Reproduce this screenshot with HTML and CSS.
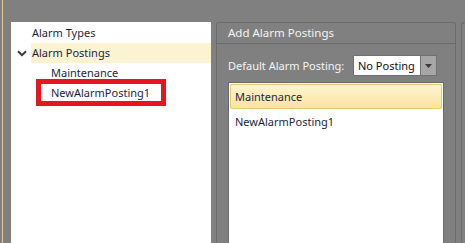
FILE: index.html
```html
<!DOCTYPE html>
<html>

<head>
  <link rel="stylesheet" href="styles.css">
</head>

<body>

  <div class="app">
    <!-- Tree of alarm settings on the left -->
    <div class="tree">
      <div class="node">
        <span class="expander"></span>
        <span class="label">Alarm Types</span>
      </div>
      <div class="node">
        <span class="expander">
          <svg width="10" height="7" viewBox="0 0 10 7">
            <path d="M1 1.2 L5 5.2 L9 1.2" fill="none" stroke="#3c3c3c" stroke-width="2" />
          </svg>
        </span>
        <span class="label selected">Alarm Postings</span>
      </div>
      <div class="node child">
        <span class="expander"></span>
        <span class="label">Maintenance</span>
      </div>
      <div class="node child">
        <span class="expander"></span>
        <span class="label marked">NewAlarmPosting1</span>
      </div>
    </div>

    <!-- Group box with the posting list -->
    <div class="group">
      <div class="group-header">Add Alarm Postings</div>
      <div class="group-body">
        <div class="field">
          <span class="field-label">Default Alarm Posting:</span>
          <div class="combo">
            <span class="combo-text">No Posting</span>
            <span class="combo-button">
              <svg width="7" height="4" viewBox="0 0 7 4">
                <path d="M0 0 L7 0 L3.5 4 Z" fill="#3a3a3a" />
              </svg>
            </span>
          </div>
        </div>
        <div class="list">
          <div class="item current">Maintenance</div>
          <div class="item">NewAlarmPosting1</div>
        </div>
      </div>
    </div>

    <div class="next-panel"></div>
  </div>

</body>

</html>
```

FILE: styles.css
```css
body {
  margin: 0;
  padding-left: 2px;
  background-color: #808080;
  font-family: "Noto Sans", "Open Sans", sans-serif;
  font-size: 11px;
  overflow: hidden;
}

.app {
  display: flex;
  height: 243px;
  padding-left: 8px;
  border-left: 1px solid #ecc793;
}

.tree {
  width: 200px;
  margin-top: 22px;
  padding-top: 1px;
  background-color: #ffffff;
  color: #1c1f3a;
}

.node {
  display: flex;
  height: 20px;
  line-height: 20px;
}

.expander {
  display: flex;
  align-items: center;
  width: 20px;
  padding-left: 6px;
  box-sizing: border-box;
}

.child .expander {
  width: 40px;
}

.label {
  flex: 1;
  padding-left: 1px;
  white-space: nowrap;
}

.selected {
  background-color: #fbf3d2;
}

.child .label {
  flex: 0 0 auto;
  padding-left: 0;
}

.marked {
  position: relative;
}

.marked::after {
  content: "";
  position: absolute;
  left: -15px;
  top: -4px;
  width: 120px;
  height: 17px;
  border: 5px solid #e8151f;
}

.group {
  display: flex;
  flex-direction: column;
  width: 238px;
  margin-top: 22px;
  margin-left: 5px;
  border: 1px solid #6b6b6b;
  border-bottom: none;
  border-radius: 3px 3px 0 0;
}

.group-header {
  height: 20px;
  line-height: 20px;
  padding-left: 11px;
  border-bottom: 1px solid #6b6b6b;
  color: #f4f4f4;
  font-size: 11.5px;
}

.group-body {
  display: flex;
  flex-direction: column;
  flex: 1;
  padding: 11px 11px 0 11px;
}

.field {
  display: flex;
  align-items: center;
  height: 21px;
}

.field-label {
  color: #f4f4f4;
  width: 125px;
  white-space: nowrap;
}

.combo {
  display: flex;
  width: 84px;
  height: 21px;
  box-sizing: border-box;
  border: 1px solid #707070;
  background-color: #ffffff;
}

.combo-text {
  flex: 1;
  padding-left: 4px;
  line-height: 19px;
  color: #111111;
}

.combo-button {
  display: flex;
  align-items: center;
  justify-content: center;
  width: 15px;
  border-left: 1px solid #707070;
  background-color: #a6a6a6;
}

.list {
  flex: 1;
  margin-top: 6px;
  padding: 1px;
  border: 1px solid #6b6b6b;
  border-bottom: none;
  background-color: #ffffff;
  color: #1c1f3a;
}

.item {
  height: 23px;
  line-height: 23px;
  padding-left: 4px;
  border: 1px solid transparent;
}

.current {
  border-color: #e8c96e;
  border-radius: 2px;
  background: linear-gradient(#fef4cf, #fbe4a2);
}

.next-panel {
  flex: 1;
  margin-top: 22px;
  margin-left: 5px;
  border-left: 1px solid #6b6b6b;
  border-top: 1px solid #6b6b6b;
  border-radius: 3px 0 0 0;
}
```
